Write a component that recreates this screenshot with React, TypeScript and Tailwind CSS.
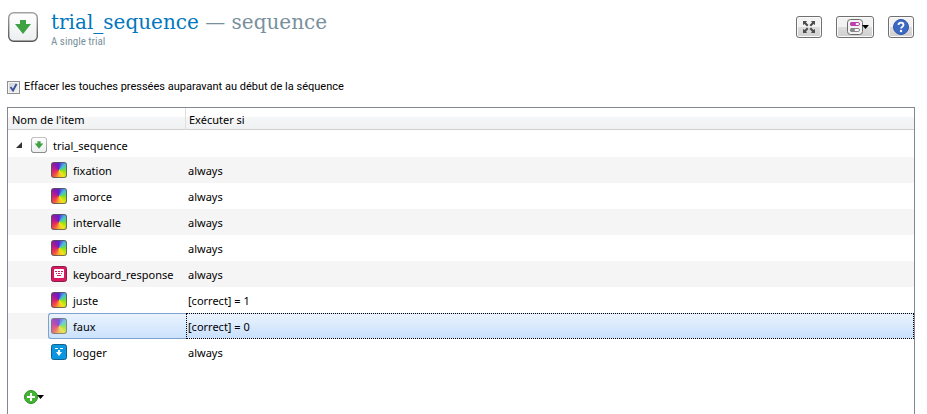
import React from "react";

type ItemKind = "sketch" | "keyboard" | "logger";
type Item = { name: string; kind: ItemKind; run: string; selected?: boolean };

const items: Item[] = [
  { name: "fixation", kind: "sketch", run: "always" },
  { name: "amorce", kind: "sketch", run: "always" },
  { name: "intervalle", kind: "sketch", run: "always" },
  { name: "cible", kind: "sketch", run: "always" },
  { name: "keyboard_response", kind: "keyboard", run: "always" },
  { name: "juste", kind: "sketch", run: "[correct] = 1" },
  { name: "faux", kind: "sketch", run: "[correct] = 0", selected: true },
  { name: "logger", kind: "logger", run: "always" },
];

function SequenceIcon({ className }: { className: string }) {
  return (
    <svg viewBox="0 0 30 30" className={className} aria-hidden="true">
      <defs>
        <linearGradient id="seqFill" x1="0" y1="0" x2="0" y2="1">
          <stop offset="0" stopColor="#ffffff" />
          <stop offset="1" stopColor="#eceef0" />
        </linearGradient>
        <linearGradient id="seqEdge" x1="0" y1="0" x2="0" y2="1">
          <stop offset="0" stopColor="#a2a2a2" />
          <stop offset="1" stopColor="#555555" />
        </linearGradient>
      </defs>
      <rect x="0.7" y="0.7" width="28.6" height="28.6" rx="5" fill="url(#seqFill)" stroke="url(#seqEdge)" strokeWidth="1.4" />
      <path d="M12 8h6v4h5l-8 10-8-10h5z" fill="#3fa142" />
    </svg>
  );
}

function ItemIcon({ kind, faded }: { kind: ItemKind; faded?: boolean }) {
  if (kind === "keyboard") {
    return (
      <svg viewBox="0 0 16 16" className="size-4 shrink-0" aria-hidden="true">
        <rect x="0.5" y="0.5" width="15" height="15" rx="2" fill="#d81b60" stroke="#8c1d48" />
        <rect x="3" y="3" width="10" height="9" rx="1" fill="#fff" />
        <path d="M4 5h2v1H4zM7 5h2v1H7zM10 5h2v1h-2zM5 7h1v1H5zM7 7h2v1H7zM10 7h1v1h-1zM6 9h4v1H6z" fill="#d81b60" />
      </svg>
    );
  }
  if (kind === "logger") {
    return (
      <svg viewBox="0 0 16 16" className="size-4 shrink-0" aria-hidden="true">
        <rect x="0.5" y="0.5" width="15" height="15" rx="2" fill="#0897e0" stroke="#12628e" />
        <path d="M4 4h3v1H4zM9 4h3v1H9zM7 6h2v2h2l-3 4-3-4h2z" fill="#fff" />
      </svg>
    );
  }
  return (
    <span
      className={`size-4 shrink-0 rounded-[3px] border border-[#555]/80 bg-[conic-gradient(#5d1fd0_0deg,#48b9e0_45deg,#62d860_80deg,#9be20f_105deg,#f2e41c_145deg,#f7b82b_180deg,#f45b3c_215deg,#e2325e_245deg,#c01d85_280deg,#8619ac_325deg,#5d1fd0_360deg)] bg-origin-border ${faded ? "opacity-75" : ""}`}
    />
  );
}

function ToolButton({ label, wide, children }: { label: string; wide?: boolean; children: React.ReactNode }) {
  return (
    <button
      type="button"
      aria-label={label}
      className={`flex h-[22px] items-center justify-center rounded-[3px] border border-[#707070] bg-linear-to-b from-[#f2f2f2] from-50% via-[#dddddd] via-50% to-[#cfcfcf] shadow-[inset_0_0_0_1px_#fafafa] ${wide ? "w-[38px]" : "w-[26px]"}`}
    >
      {children}
    </button>
  );
}

function Caret() {
  return (
    <svg viewBox="0 0 7 4" className="h-1 w-[7px]" aria-hidden="true">
      <path d="M0 0h7L3.500 4z" fill="#000" />
    </svg>
  );
}

export default function App() {
  return (
    <main className="flex h-screen flex-col overflow-hidden bg-white pr-3 pl-[7px] font-['Noto_Sans',sans-serif] text-[11px] leading-4 text-black">
      <header className="flex items-start px-px pt-3">
        <SequenceIcon className="size-[30px] shrink-0" />
        <div className="-mt-1 ml-[13px] flex-1">
          <h1 className="font-['Roboto_Slab','DejaVu_Serif',serif] text-[20px] leading-7 text-[#0277bd]">
            trial_sequence <span className="text-[#78909c]">— sequence</span>
          </h1>
          <p className="font-['Roboto_Condensed',Roboto,sans-serif] text-[11px] leading-3 text-[#78909c]">A single trial</p>
        </div>
        <div className="flex gap-[14px] pt-1">
          <ToolButton label="Plein écran">
            <svg viewBox="0 0 14 14" className="size-[14px]" aria-hidden="true">
              <path d="M1 1h4L4 2.500 6.500 5 5 6.500 2.500 4 1 5zM13 1v4l-1.500-1L9 6.500 7.500 5 10 2.500 9 1zM1 13V9l1.500 1L5 7.500 6.500 9 4 11.500 5 13zM13 13H9l1-1.500L7.500 9 9 7.500l2.500 2.500L13 9z" fill="#4d4d4d" />
            </svg>
          </ToolButton>
          <ToolButton label="Affichage" wide>
            <span className="ml-[5px] flex items-center">
              <svg viewBox="0 0 16 16" className="size-4" aria-hidden="true">
                <rect x="0.500" y="0.500" width="15" height="15" rx="3" fill="#f2f2f2" stroke="#6b6b6b" />
                <rect x="3.500" y="3.500" width="9" height="3" rx="1.500" fill="#fff" stroke="#bd3fb0" />
                <rect x="3" y="3" width="6" height="4" rx="2" fill="#bd3fb0" />
                <rect x="3.500" y="9.500" width="9" height="3" rx="1.500" fill="#fff" stroke="#888" />
                <rect x="3" y="9" width="5" height="4" rx="2" fill="#888" />
              </svg>
              <span className="-ml-px"><Caret /></span>
            </span>
          </ToolButton>
          <ToolButton label="Aide">
            <svg viewBox="0 0 16 16" className="size-4" aria-hidden="true">
              <circle cx="8" cy="8" r="7.500" fill="#3c69c4" stroke="#2d56ac" />
              <path d="M5.500 6c0-3.300 5-3.300 5 0 0 1.700-2.400 1.700-2.400 3.500" fill="none" stroke="#fff" strokeWidth="1.800" />
              <circle cx="8" cy="12" r="1.200" fill="#fff" />
            </svg>
          </ToolButton>
        </div>
      </header>

      <label className="mt-[29px] flex h-5 items-center gap-1 font-[Roboto,sans-serif]">
        <span className="relative flex size-[13px]">
          <input
            type="checkbox"
            defaultChecked
            className="peer size-[13px] appearance-none border border-[#8e8f8f] bg-linear-to-br from-[#cbcfd5] to-[#f6f6f6] shadow-[inset_0_0_0_1px_#f4f4f4]"
          />
          <svg viewBox="0 0 13 13" className="pointer-events-none absolute inset-0 hidden peer-checked:block" aria-hidden="true">
            <path d="M3.500 6l2.500 3.500L9.500 3" fill="none" stroke="#3c5099" strokeWidth="1.900" />
          </svg>
        </span>
        Effacer les touches pressées auparavant au début de la séquence
      </label>

      <section className="mt-[10px] flex-1 border border-b-0 border-[#828790]">
        <table className="w-full table-fixed border-separate border-spacing-0 text-left">
          <colgroup>
            <col className="w-[178px]" />
            <col />
          </colgroup>
          <thead>
            <tr className="h-[22px] bg-linear-to-b from-white from-40% via-[#f5f6f8] via-40% to-[#f0f1f3]">
              <th className="border-r border-b border-r-[#dfdfe1] border-b-[#d0d0d2] p-0 pt-0.5 pl-1 font-normal">Nom de l'item</th>
              <th className="border-b border-[#d0d0d2] p-0 pt-0.5 pl-[3px] font-normal">Exécuter si</th>
            </tr>
          </thead>
          <tbody>
            <tr className="h-[27px]">
              <td className="p-0 pt-0.5 pl-2">
                <div className="flex items-center">
                  <svg viewBox="0 0 6 6" className="size-[6px]" aria-hidden="true">
                    <path d="M6 0v6H0z" fill="#333" />
                  </svg>
                  <SequenceIcon className="mx-[9px] mr-[6px] size-4" />
                  <span className="pt-0.5">trial_sequence</span>
                </div>
              </td>
              <td className="p-0" />
            </tr>
            {items.map((item) => (
              <tr key={item.name} className="h-[26px] odd:bg-white even:bg-[#f5f5f5]">
                <td className="p-0 pl-10">
                  <div
                    className={`flex h-[26px] items-center gap-[6px] rounded-l-[3px] border border-r-0 pl-[2px] ${item.selected ? "border-[#7da2ce] bg-linear-to-b from-[#ebf3fd] to-[#cbe2fd]" : "border-transparent"}`}
                  >
                    <ItemIcon kind={item.kind} faded={item.selected} />
                    <span className="pt-0.5">{item.name}</span>
                  </div>
                </td>
                <td className="p-0">
                  <div
                    className={`flex h-[26px] items-center border pl-px ${item.selected ? "border-dotted border-black bg-linear-to-b from-[#ebf3fd] to-[#c8e0fc]" : "border-transparent"}`}
                  >
                    <span className="pt-0.5">{item.run}</span>
                  </div>
                </td>
              </tr>
            ))}
          </tbody>
        </table>
        <button type="button" aria-label="Ajouter" className="mt-[25px] ml-4 flex items-center">
          <svg viewBox="0 0 14 14" className="size-[14px]" aria-hidden="true">
            <circle cx="7" cy="7" r="6.500" fill="#43b532" stroke="#2f8f24" />
            <path d="M6 3h2v3h3v2H8v3H6V8H3V6h3z" fill="#fff" />
          </svg>
          <span className="-ml-px"><Caret /></span>
        </button>
      </section>
    </main>
  );
}
